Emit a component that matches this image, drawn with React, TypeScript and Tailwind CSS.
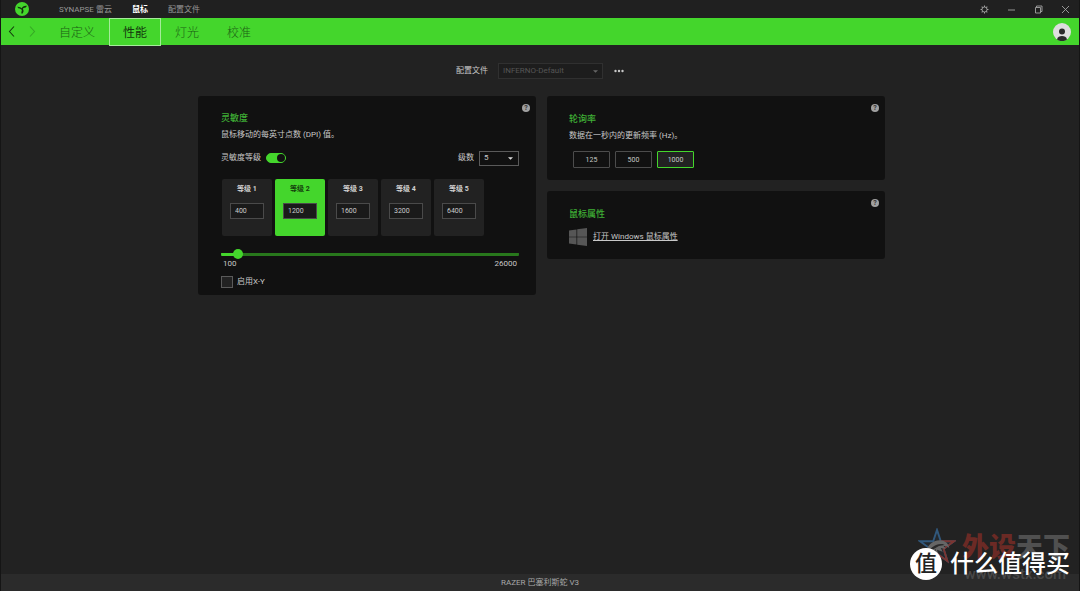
import React, { useState } from "react";

const MENU = ["SYNAPSE 雷云", "鼠标", "配置文件"];
const TABS = ["自定义", "性能", "灯光", "校准"];
const RATES = [125, 500, 1000];
const MIN_DPI = 100;
const MAX_DPI = 26000;

interface CardProps {
  title: string;
  className: string;
  children: React.ReactNode;
}

const Card: React.FC<CardProps> = ({ title, className, children }) => (
  <section className={`relative rounded-[3px] bg-[#111111] ${className}`}>
    <button
      aria-label="帮助"
      className="absolute top-2 right-[6px] flex size-2 items-center justify-center rounded-full bg-[#a0a0a0] text-[7px] leading-none font-bold text-[#333333]"
    >
      ?
    </button>
    <h2 className="text-[9px] leading-4 font-medium text-[#3fae35]">{title}</h2>
    {children}
  </section>
);

const RazerLogo = () => (
  <svg viewBox="0 0 28 28" className="size-[14px]" aria-hidden="true">
    <circle cx="14" cy="14" r="14" fill="#44d62c" />
    <g fill="#14320f">
      <path d="M4.500 9.500C8 9 12 10.500 14.500 13.500L13.500 15.500C10.500 13 8.500 14 7 12.500z" />
      <path d="M13 13.500C14.500 9.500 18 7 23.500 7.500C23 10.500 21 11.500 18.500 11.500C16.500 11.500 16 13.500 15.500 15z" />
      <path d="M13 13.500L15.500 13.500C18 17 17.500 20.500 14 24C12 21.500 12.500 20 13.500 18C14 16.500 13.500 15 13 13.500z" />
    </g>
  </svg>
);

const TitleBar = () => (
  <header className="flex h-[18px] items-center bg-[#202020] pl-[14px]">
    <RazerLogo />
    <nav className="ml-[30px] flex gap-5 pt-px text-[8px] leading-4">
      {MENU.map((item) => (
        <button
          key={item}
          className={item === "鼠标" ? "font-bold text-white" : "text-[#969696]"}
        >
          {item}
        </button>
      ))}
    </nav>
    <div className="ml-auto flex text-[#a3a3a3]">
      <button aria-label="设置" className="flex w-[27px] justify-center">
        <svg viewBox="0 0 16 16" className="size-[9px]" fill="none" stroke="currentColor">
          <circle cx="8" cy="8" r="4.500" strokeWidth="1.600" />
          <path
            d="M8 1v2.500M8 12.500V15M1 8h2.500M12.500 8H15M3 3l1.800 1.800M11.200 11.200L13 13M13 3l-1.800 1.800M4.800 11.200L3 13"
            strokeWidth="1.800"
          />
        </svg>
      </button>
      <button aria-label="最小化" className="flex w-[27px] justify-center">
        <svg viewBox="0 0 9 9" className="size-[9px]" stroke="currentColor">
          <path d="M1 5h7" strokeWidth="0.900" />
        </svg>
      </button>
      <button aria-label="还原" className="flex w-[27px] justify-center">
        <svg viewBox="0 0 9 9" className="size-[9px]" fill="none" stroke="currentColor" strokeWidth="0.900">
          <path d="M1.500 2.500h5v5.500h-5zM2.500 2.500v-1.500h5.500v5.500h-1.500" />
        </svg>
      </button>
      <button aria-label="关闭" className="flex w-[27px] justify-center">
        <svg viewBox="0 0 9 9" className="size-[9px]" stroke="currentColor" strokeWidth="0.900">
          <path d="M1 1l7 7M8 1l-7 7" />
        </svg>
      </button>
    </div>
  </header>
);

const TabBar = () => (
  <div className="flex h-[27px] items-center bg-[#44d62c] pl-[6px]">
    <button aria-label="后退" className="text-[#143d0d]">
      <svg viewBox="0 0 9 11" className="h-[11px] w-[9px]" fill="none" stroke="currentColor" strokeWidth="1.100">
        <path d="M7 0.500L2.500 5.500L7 10.500" />
      </svg>
    </button>
    <button aria-label="前进" className="ml-3 text-[#36a825]">
      <svg viewBox="0 0 9 11" className="h-[11px] w-[9px]" fill="none" stroke="currentColor" strokeWidth="1.100">
        <path d="M2 0.500L6.500 5.500L2 10.500" />
      </svg>
    </button>
    <nav className="ml-2 flex text-[12px] font-light">
      {TABS.map((tab) => (
        <button
          key={tab}
          className={
            tab === "性能"
              ? "h-7 border border-[#a5eb9a] px-[13px] pt-[2px] font-normal text-[#14380e]"
              : "h-7 px-[14px] pt-[2px] text-[#1c6114]"
          }
        >
          {tab}
        </button>
      ))}
    </nav>
    <button aria-label="账户" className="mr-2 ml-auto">
      <svg viewBox="0 0 18 18" className="size-[18px]">
        <circle cx="9" cy="9" r="9" fill="#dedede" />
        <circle cx="9" cy="8.500" r="3" fill="#2a2a2a" />
        <path d="M4 16.500C4.500 13.800 6.500 13 9 13s4.500 0.800 5 3.500A9 9 0 0 1 4 16.500z" fill="#2a2a2a" />
      </svg>
    </button>
  </div>
);

const Sensitivity = () => {
  const [levels, setLevels] = useState([400, 1200, 1600, 3200, 6400]);
  const [active, setActive] = useState(1);
  const dpi = levels[active];
  const fill = ((dpi - MIN_DPI) / (MAX_DPI - MIN_DPI)) * 100;

  const setLevel = (index: number, value: number) =>
    setLevels(levels.map((level, i) => (i === index ? value : level)));

  return (
    <Card title="灵敏度" className="pt-[14px] pr-[17px] pb-[7px] pl-[23px]">
      <p className="mt-px text-[8px] leading-4">鼠标移动的每英寸点数 (DPI) 值。</p>

      <div className="mt-[7px] flex h-4 items-center text-[8px]">
        <label htmlFor="stages">灵敏度等级</label>
        <input
          id="stages"
          type="checkbox"
          role="switch"
          defaultChecked
          className="ml-[5px] h-[10px] w-5 appearance-none rounded-full border border-[#44d62c] bg-[#111111] before:block before:size-2 before:rounded-full before:bg-[#44d62c] checked:bg-[#44d62c] checked:before:ml-[10px] checked:before:bg-[#111111]"
        />
        <label htmlFor="count" className="ml-auto">
          级数
        </label>
        <div className="relative ml-[5px]">
          <select
            id="count"
            defaultValue="5"
            className="block h-[15px] w-10 appearance-none border border-[#5a5a5a] bg-[#111111] pl-1 text-[8px] leading-3"
          >
            {[1, 2, 3, 4, 5].map((n) => (
              <option key={n}>{n}</option>
            ))}
          </select>
          <svg viewBox="0 0 6 3" className="pointer-events-none absolute top-[6px] right-[6px] h-[3px] w-[5px]">
            <path d="M0 0h6l-3 3z" fill="#dddddd" />
          </svg>
        </div>
      </div>

      <div className="mt-[13px] ml-px flex gap-[3px]">
        {levels.map((level, i) => (
          <div
            key={i}
            onClick={() => setActive(i)}
            className={`flex h-[57px] w-[50px] flex-col items-center rounded-[2px] pt-1 ${
              i === active ? "bg-[#44d62c] text-[#14400d]" : "bg-[#222222] text-[#d0d0d0]"
            }`}
          >
            <label htmlFor={`level-${i}`} className="text-[7px] leading-3 font-bold">
              等级 {i + 1}
            </label>
            <input
              id={`level-${i}`}
              value={level}
              onChange={(e) => setLevel(i, Number(e.target.value) || 0)}
              className="mt-2 h-4 w-[34px] border border-[#4a4a4a] bg-[#1a1a1a] pl-1 text-[7px] leading-3 text-[#cccccc]"
            />
          </div>
        ))}
      </div>

      <input
        type="range"
        aria-label="DPI"
        min={MIN_DPI}
        max={MAX_DPI}
        step={50}
        value={dpi}
        onChange={(e) => setLevel(active, Number(e.target.value))}
        style={{
          backgroundImage: `linear-gradient(to right, #44d62c ${fill}%, #28781c ${fill}%)`,
        }}
        className="mt-[13px] block h-[10px] w-full appearance-none rounded-full bg-size-[100%_3px] bg-center bg-no-repeat [&::-webkit-slider-thumb]:size-[10px] [&::-webkit-slider-thumb]:appearance-none [&::-webkit-slider-thumb]:rounded-full [&::-webkit-slider-thumb]:bg-[#44d62c]"
      />
      <div className="flex justify-between px-[2px] text-[8px] leading-[10px]">
        <span>100</span>
        <span>26000</span>
      </div>

      <div className="mt-[7px] flex h-3 items-center text-[8px]">
        <input
          id="xy"
          type="checkbox"
          className="size-3 appearance-none border border-[#5a5a5a] bg-[#222222] checked:bg-[#44d62c]"
        />
        <label htmlFor="xy" className="ml-1">
          启用X-Y
        </label>
      </div>
    </Card>
  );
};

const PollingRate = () => {
  const [rate, setRate] = useState(1000);

  return (
    <Card title="轮询率" className="px-[22px] pt-[15px] pb-3">
      <p className="mt-px text-[8px] leading-4">数据在一秒内的更新频率 (Hz)。</p>
      <div className="mt-[7px] ml-1 flex gap-[5px] text-[7px]">
        {RATES.map((value) => (
          <button
            key={value}
            onClick={() => setRate(value)}
            className={
              value === rate
                ? "h-[17px] w-[37px] rounded-[1px] border border-[#44d62c] bg-[#222222] leading-3"
                : "h-[17px] w-[37px] rounded-[1px] border border-[#4c4c4c] leading-3"
            }
          >
            {value}
          </button>
        ))}
      </div>
    </Card>
  );
};

const MouseProperties = () => (
  <Card title="鼠标属性" className="px-[22px] pt-[15px] pb-[13px]">
    <div className="mt-[5px] flex h-[19px] items-center gap-[6px]">
      <svg viewBox="0 0 18 18" className="size-[18px]" fill="#565656" aria-hidden="true">
        <path d="M0 2.500L7.500 1.400v7.300H0zM8.200 1.300L18 0v8.700H8.200zM0 9.300h7.500v7.300L0 15.500zM8.200 9.300H18V18l-9.800-1.300z" />
      </svg>
      <a href="#mouse" className="text-[8px] leading-[10px] underline">
        打开 Windows 鼠标属性
      </a>
    </div>
  </Card>
);

const Watermark = () => (
  <div className="pointer-events-none absolute right-[9px] bottom-[11px]">
    <div className="absolute right-0 bottom-4 flex items-end">
      <svg viewBox="0 0 40 38" className="mr-[6px] h-9 w-[38px] shrink-0">
        <path
          d="M20 2L24 14H38L27 22L31 35L20 27L9 35L13 22L2 14H16Z"
          fill="#24282c"
          stroke="#31587c"
          strokeWidth="2"
        />
        <path d="M24 14H38L27 22L31 35L20 27" fill="none" stroke="#7b3531" strokeWidth="2" />
        <path d="M8 27C9 19 15 13 23 13C28 13 32 16 33 21L30 19L27 19L29 22L24 21L26 25L20 23L21 27L15 25L11 30Z" fill="#666666" />
        <path d="M12 24C15 19 20 17 26 17L28 18L22 19L17 22ZM14 27L19 22L18 26Z" fill="#2b2b2b" />
      </svg>
      <div className="text-[27px] leading-8 font-black whitespace-nowrap text-[#505050]">
        <span className="text-[#6b2a25]">外设</span>天下
      </div>
    </div>
    <div className="absolute right-1 bottom-[-2px] text-[15px] leading-4 font-medium text-[#484848]">
      www.wstx.com
    </div>
    <div className="relative flex items-center gap-2 text-white">
      <span className="flex size-8 items-center justify-center rounded-full bg-white text-[22px] leading-none font-medium text-[#222222]">
        值
      </span>
      <span className="text-[24px] leading-7 font-medium whitespace-nowrap">什么值得买</span>
    </div>
  </div>
);

export default function App() {
  return (
    <div className="relative flex min-h-screen flex-col border-x border-[#151515] bg-[#222222] font-['Roboto','Noto_Sans_CJK_SC',sans-serif] text-[#c8c8c8]">
      <TitleBar />
      <TabBar />

      <main className="flex-1 pt-[18px] pl-[3px]">
        <div className="flex h-4 items-center justify-center pr-[3px] text-[8px]">
          <label htmlFor="profile">配置文件</label>
          <div className="relative ml-[10px]">
            <select
              id="profile"
              className="block h-4 w-[105px] appearance-none border border-[#303030] bg-[#1d1d1d] pl-1 text-[8px] leading-3 text-[#555555]"
            >
              <option>INFERNO-Default</option>
            </select>
            <svg viewBox="0 0 6 3" className="pointer-events-none absolute top-[7px] right-[5px] h-[3px] w-[5px]">
              <path d="M0 0h6l-3 3z" fill="#666666" />
            </svg>
          </div>
          <button aria-label="更多" className="ml-[11px]">
            <svg viewBox="0 0 10 4" className="h-1 w-[10px]" fill="#c8c8c8">
              <circle cx="1.500" cy="2" r="1.200" />
              <circle cx="5" cy="2" r="1.200" />
              <circle cx="8.500" cy="2" r="1.200" />
            </svg>
          </button>
        </div>

        <div className="mx-auto mt-[17px] grid max-w-[687px] grid-cols-2 items-start gap-[11px]">
          <Sensitivity />
          <div className="flex flex-col gap-[11px]">
            <PollingRate />
            <MouseProperties />
          </div>
        </div>
      </main>

      <footer className="h-[17px] bg-[#2b2b2b] text-center text-[8px] leading-[17px] text-[#a8a8a8]">
        RAZER 巴塞利斯蛇 V3
      </footer>
      <Watermark />
    </div>
  );
}
